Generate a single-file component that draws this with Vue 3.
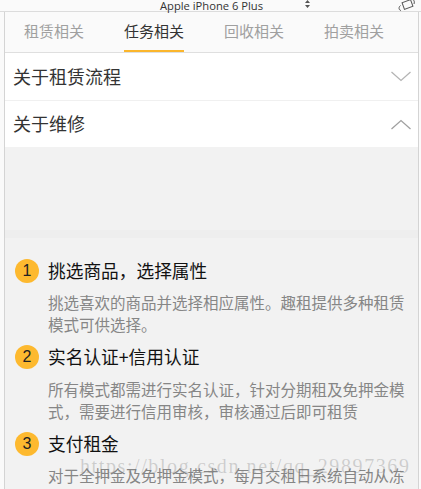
<script setup>
const tabs = ['租赁相关', '任务相关', '回收相关', '拍卖相关']
const steps = [
  { n: 1, title: '挑选商品，选择属性', text: '挑选喜欢的商品并选择相应属性。趣租提供多种租赁模式可供选择。' },
  { n: 2, title: '实名认证+信用认证', text: '所有模式都需进行实名认证，针对分期租及免押金模式，需要进行信用审核，审核通过后即可租赁' },
  { n: 3, title: '支付租金', text: '对于全押金及免押金模式，每月交租日系统自动从冻结押金中扣除当月租金' }
]
</script>

<template>
  <div class="page">
    <div class="device-bar">
      <span class="device-name">Apple iPhone 6 Plus</span>
      <svg class="updown" width="5" height="8" viewBox="0 0 5 8"><path d="M2.5 0 5 3H0zM2.5 8 0 5h5z" fill="#555" /></svg>
      <svg class="rotate" width="18" height="13" viewBox="0 0 18 13" fill="none" stroke="#555" stroke-width="1">
        <rect x="5" y="2" width="9" height="7" transform="rotate(-20 9.5 5.5)" />
        <path d="M3 11.5 C0.5 11 0.5 8 2.5 6.5 M13 0.5 C15.5 0 17 2 16 5" />
      </svg>
    </div>
    <div class="frame">
      <nav class="tabs">
        <div v-for="(t, i) in tabs" :key="t" class="tab" :class="{ active: i === 1 }">{{ t }}</div>
      </nav>
      <section class="faq">
        <div class="row">
          <span class="row-label">关于租赁流程</span>
          <svg width="20" height="11" viewBox="0 0 20 11" fill="none" stroke="#b4b4b4" stroke-width="1.3"><path d="M0.5 1l9.5 8.5L19.5 1" /></svg>
        </div>
        <div class="row">
          <span class="row-label">关于维修</span>
          <svg width="20" height="11" viewBox="0 0 20 11" fill="none" stroke="#a0a0a0" stroke-width="1.3"><path d="M0.5 10l9.5-8.5L19.5 10" /></svg>
        </div>
      </section>
      <div class="blank"></div>
      <div class="band"></div>
      <section class="steps">
        <article v-for="s in steps" :key="s.n" class="step">
          <div class="step-head">
            <span class="badge">{{ s.n }}</span>
            <h3>{{ s.title }}</h3>
          </div>
          <p>{{ s.text }}</p>
        </article>
      </section>
    </div>
    <div class="watermark">https://blog.csdn.net/qq_29897369</div>
  </div>
</template>

<style>
html, body { margin: 0; background: #fff; }
</style>

<style scoped>
.page {
  position: relative;
  width: 421px;
  height: 489px;
  overflow: hidden;
  background: #fafafa;
  font-family: "Noto Sans CJK SC", "Open Sans", sans-serif;
}
.device-bar {
  position: relative;
  height: 11px;
  border-bottom: 1px solid #dcdcdc;
  display: flex;
  justify-content: center;
  align-items: center;
}
.device-name {
  font-family: "Open Sans", sans-serif;
  font-size: 11.2px;
  color: #333;
  line-height: 11px;
  margin-left: 2px;
}
.updown { position: absolute; left: 305px; top: 0; }
.rotate { position: absolute; left: 398px; top: -1px; }
.frame {
  margin: 0 2px 0 4px;
  border-left: 1px solid #d4d4d4;
  border-right: 1px solid #d4d4d4;
  height: 477px;
  overflow: hidden;
  background: #f2f2f2;
}
.tabs {
  height: 40px;
  display: flex;
  background: #fafafa;
  border-bottom: 1px solid #dfdfdf;
  padding-left: 19px;
  gap: 40px;
}
.tab {
  width: 60px;
  height: 40px;
  line-height: 38px;
  font-size: 15px;
  color: #a0a0a0;
  text-align: center;
  white-space: nowrap;
  box-sizing: border-box;
}
.tab.active {
  color: #333;
  border-bottom: 2px solid #fbb62c;
}
.faq { background: #fff; }
.row {
  height: 48px;
  box-sizing: border-box;
  padding: 0 7px 0 8px;
  display: flex;
  align-items: center;
  justify-content: space-between;
  font-size: 18px;
  color: #333;
  border-bottom: 1px solid #f0f0f0;
}
.row-label { margin-bottom: 2px; }
.row:last-child { height: 46px; border-bottom: 0; }
.blank { height: 83px; }
.band { height: 8px; background: #eeeeee; }
.steps { padding: 20px 8px 0 10px; }
.step { margin-bottom: 9.5px; }
.step-head {
  display: flex;
  align-items: center;
  gap: 9px;
  height: 25px;
}
.badge {
  width: 24px;
  height: 24px;
  border-radius: 50%;
  background: #fdb92f;
  color: #222;
  font-family: "Liberation Sans", sans-serif;
  font-size: 16px;
  line-height: 24px;
  text-align: center;
  flex: none;
}
h3 {
  margin: 0 0 2px;
  font-size: 17.7px;
  font-weight: 400;
  color: #111;
  white-space: nowrap;
}
p {
  margin: 8px 0 0 33px;
  font-size: 15.5px;
  line-height: 22px;
  color: #868686;
}
.watermark {
  position: absolute;
  left: 80px;
  top: 455px;
  font-family: "Liberation Serif", serif;
  font-size: 20px;
  letter-spacing: 1.6px;
  color: rgba(110, 110, 110, 0.28);
  white-space: nowrap;
}
</style>
